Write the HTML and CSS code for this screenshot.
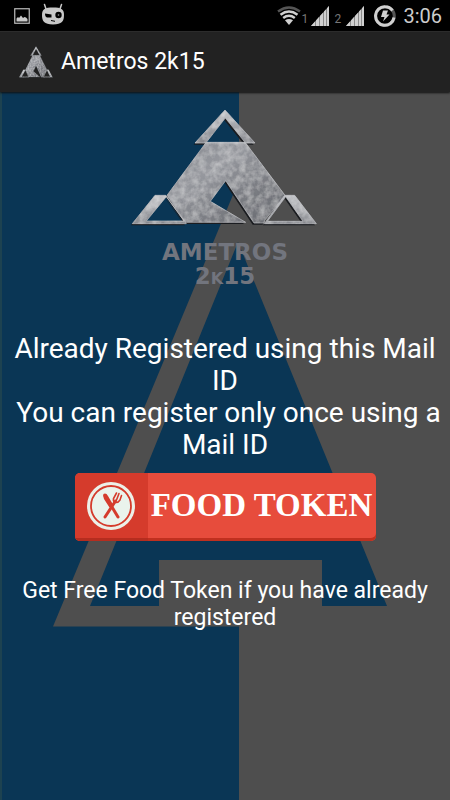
FILE: index.html
```html
<!DOCTYPE html>
<html lang="en">
<head>
  <meta charset="UTF-8">
  <meta name="viewport" content="width=device-width, initial-scale=1">
  <title>Ametros 2k15</title>
  <link rel="stylesheet" href="styles.css">
</head>
<body>

  <svg class="defs" width="0" height="0" aria-hidden="true">
    <defs>
      <linearGradient id="metal" x1="0" y1="0" x2="1" y2="1">
        <stop offset="0" stop-color="#85888e"/>
        <stop offset="0.35" stop-color="#96989e"/>
        <stop offset="0.6" stop-color="#7e8086"/>
        <stop offset="1" stop-color="#66686e"/>
      </linearGradient>
      <linearGradient id="edge" x1="0" y1="0" x2="0" y2="1">
        <stop offset="0" stop-color="#c0c2c6"/>
        <stop offset="1" stop-color="#84868c"/>
      </linearGradient>
      <filter id="brushed" x="-5%" y="-5%" width="110%" height="110%">
        <feTurbulence type="fractalNoise" baseFrequency="0.05" numOctaves="3" seed="4" result="noise"/>
        <feColorMatrix in="noise" type="matrix" values="0 0 0 0 1  0 0 0 0 1  0 0 0 0 1  0.6 0 0 0 -0.2" result="light"/>
        <feComposite in="light" in2="SourceAlpha" operator="in" result="grain"/>
        <feMerge>
          <feMergeNode in="SourceGraphic"/>
          <feMergeNode in="grain"/>
        </feMerge>
      </filter>
      <symbol id="logo" viewBox="36 38 564 354" preserveAspectRatio="none">
        <g fill="#1a1c20" transform="translate(-4 5)" fill-rule="evenodd">
          <path d="M318 44 408 143H228ZM319 68 262 141H378Z"/>
          <path d="M260 143H380L498 300 437 375 435 383H405L320 256 274 318 380 381H200L144 300Z"/>
          <path d="M108 300H140L202 385H40ZM142 304 82 377H195Z"/>
          <path d="M497 300H527L592 385H436ZM500 304 445 378H552Z"/>
        </g>
        <g fill-rule="evenodd" stroke="#bcbec2" stroke-width="2" filter="url(#brushed)">
          <path fill="url(#edge)" d="M318 44 408 143H228ZM319 68 262 141H378Z"/>
          <path fill="url(#metal)" d="M260 143H380L498 300 437 375 435 383H405L320 256 274 318 380 381H200L144 300Z"/>
          <path fill="url(#edge)" d="M108 300H140L202 385H40ZM142 304 82 377H195Z"/>
          <path fill="url(#edge)" d="M497 300H527L592 385H436ZM500 304 445 378H552Z"/>
        </g>
      </symbol>
      <symbol id="signal" viewBox="0 0 18 20">
        <path fill="#8a8a8a" d="M0 20 18 0V20Z"/>
        <path fill="#d0d0d0" d="M0 20 4 15.6V20ZM5 14.5 8 11.1V20H5ZM9 10 12 6.7V20H9ZM13 5.6 15 3.4V20H13ZM16 2.2 18 0V20H16Z"/>
      </symbol>
    </defs>
  </svg>

  <header class="status-bar">
    <svg class="icon-picture" viewBox="0 0 16 16" aria-hidden="true">
      <rect x="0.75" y="0.75" width="14.5" height="14.5" fill="none" stroke="#bdbdbd" stroke-width="1.2"/>
      <path fill="#c8c8c8" d="M2.5 13.5V10.5L4 9l1 1 2-2.5 2 2.5 1.5-1L12 9.5l1.5 1.5v2.5Z"/>
    </svg>
    <svg class="icon-cid" viewBox="0 0 24 22" aria-hidden="true">
      <path d="M5 6 3.500 1.500M19 6l1.500-4.500" stroke="#c8c8c8" stroke-width="1.5" stroke-linecap="round"/>
      <path fill="#c8c8c8" d="M1 12C1 6 4 4.500 12 4.500S23 6 23 12 21 21.500 12 21.500 1 18 1 12Z"/>
      <path fill="#000" d="M4 10.500 10.500 11.500V14.500H6Q4 14 4 10.500Z"/>
      <circle cx="17.5" cy="12" r="3.2" fill="#000"/>
      <circle cx="17.5" cy="12" r="0.8" fill="#999"/>
      <path d="M10 17.500l4 .8" stroke="#000" stroke-width="1"/>
    </svg>
    <div class="status-right">
      <svg class="icon-wifi" viewBox="0 0 24 19" aria-hidden="true">
        <path fill="none" stroke="#555" stroke-width="2.5" d="M1 5.500Q12-2.500 23 5.500"/>
        <path fill="none" stroke="#d0d0d0" stroke-width="2.5" d="M3.500 8.700Q12 2.300 20.500 8.700M6.200 12Q12 7.600 17.800 12"/>
        <path fill="#d0d0d0" d="M8 14.300Q12 11.500 16 14.300L12 19Z"/>
      </svg>
      <span class="sim">1</span>
      <svg class="icon-signal" aria-hidden="true"><use href="#signal"/></svg>
      <span class="sim sim-second">2</span>
      <svg class="icon-signal" aria-hidden="true"><use href="#signal"/></svg>
      <svg class="icon-battery" viewBox="0 0 22 22" aria-hidden="true">
        <circle cx="11" cy="11" r="9.3" fill="none" stroke="#555" stroke-width="3"/>
        <path d="M11 1.700A9.300 9.300 0 1 0 20 12.500M11 1.700A9.300 9.300 0 0 1 18.500 5.500" fill="none" stroke="#d0d0d0" stroke-width="3"/>
        <path fill="#d0d0d0" d="M9 5.500H14L12.500 9.500H15.500L9 16.500 10.500 12H7Z"/>
      </svg>
      <span class="clock">3:06</span>
    </div>
  </header>

  <div class="action-bar">
    <svg class="app-icon" aria-hidden="true"><use href="#logo"/></svg>
    <h1>Ametros 2k15</h1>
  </div>

  <main class="screen">
    <svg class="backdrop" viewBox="0 0 450 708" preserveAspectRatio="none" aria-hidden="true">
      <rect width="450" height="708" fill="#4e4e4e"/>
      <rect width="239" height="708" fill="#0a3655"/>
      <rect width="2" height="708" fill="#1d4250"/>
      <path fill="#4e4e4e" d="M240 86V534.500H53Z"/>
      <path fill="#0a3655" d="M238 150 387 514H322V468H159V514H90Z"/>
    </svg>

    <div class="content">
      <svg class="logo" role="img" aria-label="Ametros logo"><use href="#logo"/></svg>
      <p class="brand">AMETROS<br>2k15</p>
      <p class="message">Already Registered using this Mail ID<br>&nbsp;You can register only once using a Mail ID</p>

      <button class="food-button" type="button">
        <span class="food-icon">
          <svg viewBox="0 0 48 48" aria-hidden="true">
            <circle cx="24" cy="24" r="24" fill="#ecf0e8"/>
            <circle cx="24" cy="24" r="20" fill="#eaf3ec" stroke="#d53b2c" stroke-width="1.8"/>
            <path d="M18 13.500 31 35" stroke="#d53b2c" stroke-width="3" stroke-linecap="round"/>
            <path fill="#d53b2c" d="M16.500 12Q19 10.500 21 14L26 22.500 22.500 25.500 17 17Q15.500 14 16.500 12Z"/>
            <path d="M18 35 28.500 19" stroke="#d53b2c" stroke-width="3" stroke-linecap="round"/>
            <path d="M29.500 11 26.500 16.500Q26 20 28.500 20.500T33 18L34.500 13.500M32 11.500 29.500 18" fill="none" stroke="#d53b2c" stroke-width="1.6" stroke-linecap="round"/>
          </svg>
        </span>
        <span class="food-label">FOOD TOKEN</span>
      </button>

      <p class="hint">Get Free Food Token if you have already registered</p>
    </div>
  </main>

</body>
</html>
```

FILE: styles.css
```css
body {
  margin: 0;
  min-height: 100vh;
  display: flex;
  flex-direction: column;
  background: #000;
  color: #fff;
  font-family: Roboto, "Noto Sans", sans-serif;
}

p, h1 {
  margin: 0;
}

svg {
  display: block;
  flex-shrink: 0;
}

.defs {
  position: absolute;
}

/* status bar */
.status-bar {
  display: flex;
  align-items: center;
  height: 31px;
  padding: 0 8px 0 14px;
  background: #000;
}

.icon-picture {
  width: 16px;
  height: 16px;
}

.icon-cid {
  width: 24px;
  height: 22px;
  margin-left: 11px;
  margin-bottom: 4px;
}

.status-right {
  display: flex;
  align-items: center;
  margin-left: auto;
}

.icon-wifi {
  width: 24px;
  height: 19px;
}

.icon-signal {
  width: 18px;
  height: 20px;
}

.sim {
  width: 10px;
  margin-top: 6px;
  font-size: 12px;
  line-height: 14px;
  color: #777;
}

.sim-second {
  width: 12px;
  margin-left: 5px;
}

.icon-battery {
  width: 22px;
  height: 22px;
  margin: 0 7px 0 10px;
}

.clock {
  font-size: 20px;
  line-height: 32px;
  color: #ccc;
}

/* action bar */
.action-bar {
  position: relative;
  display: flex;
  align-items: center;
  gap: 8px;
  height: 61px;
  padding: 0 19px;
  background: #222;
  border-top: 1px solid #2c2c2c;
  box-sizing: border-box;
  box-shadow: 0 1px 2px #111;
  z-index: 1;
}

.app-icon {
  width: 34px;
  height: 32px;
}

.action-bar h1 {
  font-size: 23px;
  font-weight: 400;
  line-height: 32px;
}

/* screen */
.screen {
  position: relative;
  flex: 1;
}

.backdrop {
  position: absolute;
  width: 100%;
  height: 100%;
}

.content {
  position: relative;
  display: flex;
  flex-direction: column;
  align-items: center;
  padding: 16px 5px;
  text-align: center;
}

.logo {
  width: 188px;
  height: 118px;
}

.brand {
  margin-top: 14px;
  font-family: "DejaVu Sans", sans-serif;
  font-size: 23px;
  font-weight: bold;
  font-variant: small-caps;
  line-height: 24px;
  color: #72757e;
}

.message {
  margin-top: 45px;
  font-size: 28px;
  line-height: 32px;
}

.food-button {
  display: flex;
  align-items: stretch;
  width: 301px;
  height: 68px;
  margin-top: 12px;
  padding: 0;
  overflow: hidden;
  background: #e74c3c;
  border: none;
  border-radius: 5px;
  box-shadow: inset 0 -3px #c0301f;
  color: #fff;
  cursor: pointer;
}

.food-icon {
  display: flex;
  align-items: center;
  justify-content: center;
  width: 73px;
  padding-bottom: 3px;
  background: #d53b2c;
  box-shadow: inset 0 -3px #b52d1f;
  box-sizing: border-box;
}

.food-icon svg {
  width: 48px;
  height: 48px;
}

.food-label {
  flex: 1;
  font-family: "Liberation Serif", serif;
  font-size: 33px;
  font-weight: bold;
  line-height: 64px;
  white-space: nowrap;
}

.hint {
  margin-top: 36px;
  font-size: 23px;
  line-height: 27px;
}
```
